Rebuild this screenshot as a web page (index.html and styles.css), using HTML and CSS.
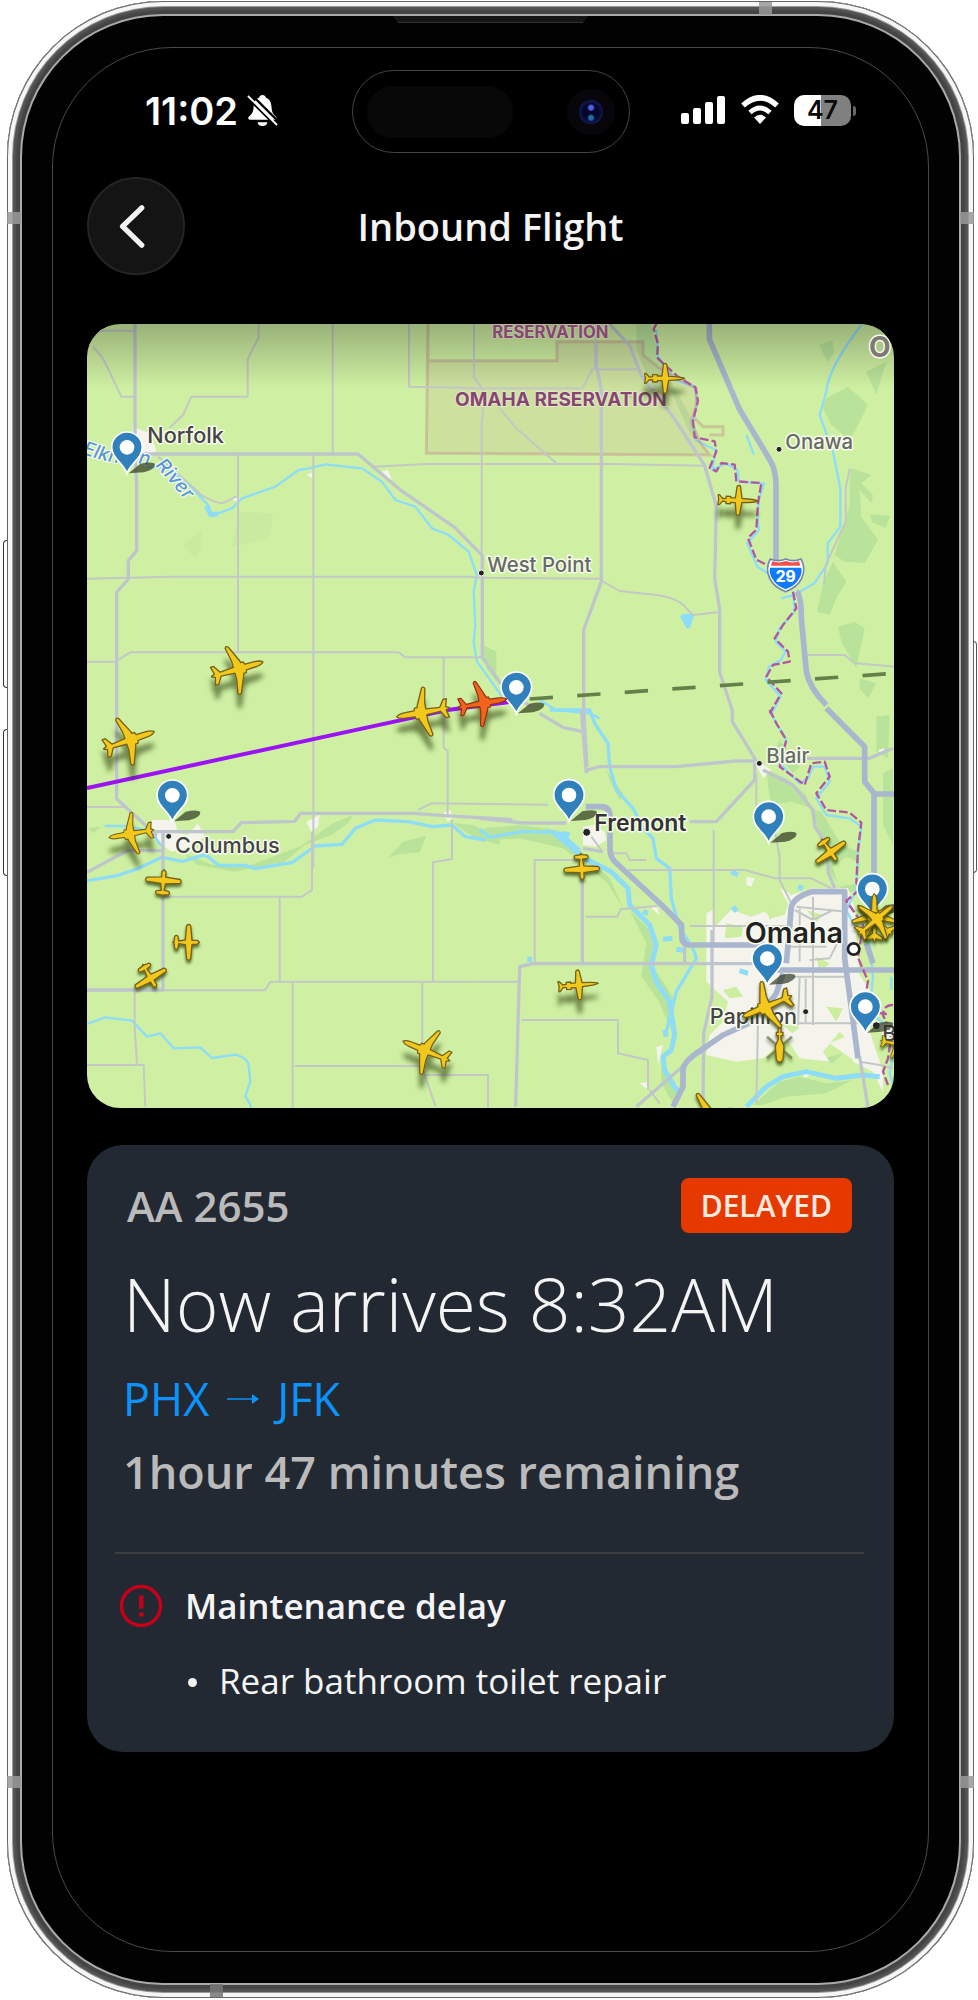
FILE: index.html
```html
<!DOCTYPE html>
<html lang="en">
<head>
<meta charset="utf-8">
<meta name="viewport" content="width=device-width, initial-scale=1">
<title>Inbound Flight</title>
<link rel="stylesheet" href="styles.css">
</head>
<body>
<div class="phone">
  <span class="side-key key-up"></span>
  <span class="side-key key-down"></span>
  <span class="side-key key-power"></span>
  <span class="antenna antenna-top"></span>
  <span class="antenna antenna-bottom"></span>
  <span class="antenna antenna-side left high"></span>
  <span class="antenna antenna-side right high"></span>
  <span class="antenna antenna-side left low"></span>
  <span class="antenna antenna-side right low"></span>
  <span class="earpiece"></span>

  <div class="screen">
    <div class="status-bar">
      <div class="status-time">
        <span>11:02</span>
        <svg class="icon-bell" viewBox="0 0 32 34" aria-hidden="true">
          <path d="M16 1c-2 0-3 1-3.400 2.500C8.500 5 7 8.500 6.800 13c-.2 5-1.300 7-5 10.500-1 1-.5 3 1.200 3h26c1.700 0 2-2 1-3-3.500-3.500-4.500-5.500-4.700-10.500C25 8.500 23.500 5 19.400 3.500 19 2 18 1 16 1zM11 29h10c0 2.500-2.500 4-5 4s-5-1.500-5-4z" fill="#fff"/>
          <path d="M3 -1L33 29M0 3L30 33" stroke="#000" stroke-width="2.500"/>
          <path d="M1 2L31 32" stroke="#fff" stroke-width="2"/>
        </svg>
      </div>
      <div class="island">
        <span class="sensor"></span>
        <span class="camera"><span class="lens"></span></span>
      </div>
      <div class="status-icons">
        <svg class="icon-signal" viewBox="0 0 46 30" aria-hidden="true" fill="#fff">
          <rect x="1" y="18" width="8" height="11" rx="2"/><rect x="13" y="13" width="8" height="16" rx="2"/><rect x="25" y="7" width="8" height="22" rx="2"/><rect x="37" y="1" width="8" height="28" rx="2"/>
        </svg>
        <svg class="icon-wifi" viewBox="0 0 38 30" aria-hidden="true">
          <path d="M2 10.500Q19-5 36 10.500" fill="none" stroke="#fff" stroke-width="5.500"/>
          <path d="M9 17.500Q19 8.500 29 17.500" fill="none" stroke="#fff" stroke-width="5"/>
          <path d="M13 22.500Q19 17 25 22.500L19 29z" fill="#fff"/>
        </svg>
        <div class="battery"><span>47</span></div>
      </div>
    </div>

    <header class="top-bar">
      <button class="back" type="button" aria-label="Back">
        <svg viewBox="0 0 98 98" aria-hidden="true"><path d="M55 30L35 49.500L55 69" fill="none" stroke="#f2f2f2" stroke-width="5.500" stroke-linecap="round" stroke-linejoin="round"/></svg>
      </button>
      <h1>Inbound Flight</h1>
    </header>

    <main>
      <svg class="map" viewBox="22 27 2421 2352" role="img" aria-label="Map of flight position">
        <defs>
          <linearGradient id="shade" x1="0" y1="0" x2="0" y2="1"><stop offset="0" stop-color="#000" stop-opacity=".26"/><stop offset=".5" stop-color="#000" stop-opacity=".13"/><stop offset="1" stop-color="#000" stop-opacity="0"/></linearGradient>
          <filter id="high" x="-50%" y="-50%" width="200%" height="230%"><feDropShadow dx="0" dy="40" stdDeviation="8" flood-color="#1c3000" flood-opacity=".55"/></filter>
          <filter id="low" x="-50%" y="-50%" width="200%" height="200%"><feDropShadow dx="0" dy="8" stdDeviation="4" flood-color="#1c3000" flood-opacity=".7"/></filter>
          <path id="jet" d="M80 0Q74-7 56-8L26-9L23-17L15-17L14-22L-8-72Q-14-78-18-70L-10-28L-10-9L-52-6L-66-28L-76-28L-70-5L-80-1V1L-70 5L-76 28L-66 28L-52 6L-10 9L-10 28L-18 70Q-14 78-8 72L14 22L15 17L23 17L26 9L56 8Q74 7 80 0z"/>
          <path id="biz" d="M60 0Q50-5 12-6L6-42Q2-48-4-42L-8-7L-22-7L-22-11L-36-11L-36-5L-46-4L-56-15L-60-15L-58 0L-60 15L-56 15L-46 4L-36 5L-36 11L-22 11L-22 7L-8 7L-4 42Q2 48 6 42L12 6Q50 5 60 0z"/>
          <path id="prop" d="M0-34L6-28L6-12L50-8Q57-2 50 4L7 8L4 28L18 30Q24 35 18 40L2 42L0 46L-2 42L-18 40Q-24 35-18 30L-4 28L-7 8L-50 4Q-57-2-50-8L-6-12L-6-28z"/>
          <g id="pin">
            <path d="M5 3L40-26Q78-34 84-24Q84-8 50 0z" fill="#28321c" opacity=".68"/>
            <path d="M0 4C-9-26-46-42-46-75A46 46 0 0 1 46-75C46-42 9-26 0 4z" fill="#2f80bb" stroke="#fff" stroke-width="5"/>
            <circle cy="-75" r="22" fill="#fff"/>
          </g>
        </defs>
        <rect x="22" y="27" width="2421" height="2352" fill="#cff0a2"/>

        <g class="wood">
          <path d="M480 590l100 5-10 75-115 25zM310 690l55-40v50l-20 30z" opacity=".35"/>
          <g transform="translate(1200 0)">
            <path d="M470 27h45l25 110 100 180 20 60-25-15-60-130-60-20-45-110z"/>
            <path d="M1018 90l40-15 5 40-20 25zM1040 250l65-35 60 55-35 70-20 35-55-45-25-50zM1160 170l60-30-30 100zM1115 460l60 20-30 25 35 35-5 25-35-40 5 80 50 70-40 70-60-5-30-20 45-150v-90zM1172 598l60 5-15 35-40-15zM1060 740l40 60-30 50-20 50-38-10 20-90zM1075 935l50-15 30 20-25 120-45-80zM1140 1090l50 15-25 45-25-30zM430 240l20-15 15 30z"/>
            <path d="M10 990l40 20v90l-30-40z"/>
          </g>
          <g transform="translate(0 1185)">
            <path d="M310 430l90 35 100 5 160-60 100-70 60-25-15 25-50 35-80 30-60 50-150 30-110-20zM925 445l45-50 70-18-20 50-60 5zM22 355l40-5-20 20zM1120 340l60 5 80 35v25l-80-25z"/>
          </g>
          <g transform="translate(1200 1185)">
            <path d="M860 180l60 25 60 50 20 80 30 80 20 70 40 60h50l-10-50 5-70-50-20-60-100-90-30-60 10-10-60zM1100 440l40 20-5 60-60 10-15-60zM1190 20l40-5-5 130-35-20zM1210 190l30-15v230l-30-60zM900 90l60 80-20 20-55-70z"/>
            <path d="M10 355l110-10 110 15 100 85 60 60 40 90-50-80-130-100-130-30-90 5zM450 600l80 80-10 90 60 90 5 120-50-110-50-70 15-100z"/>
            <path d="M820 1185l80-70 60-15 80 20 80-10-80 40-120 10-70 25zM545 1065l50 80-10 45-40-70z"/>
            <path d="M1010 1050l80-20-30 30zM380 180l50 70-10 20-30-60z"/>
          </g>
        </g>

        <g fill="#f4f4ec">
          <path d="M160 335l50 20 20 50-15 20-60-15zM680 480l20-8v18zM455 548l20-5-5 18zM905 470l20-5 15 40z"/>
          <g transform="translate(0 1185)"><path d="M215 330h70l10 40 30 5 30-35 20 40-40 30-60 15-55-40zM680 335l40-20-5 35-20 15zM1090 310l20-10 10 20-15 15z"/></g>
          <g transform="translate(1200 1185)">
            <path d="M310 350l30-5 35 20 5 25-30 20-40-5zM830 165l15-5 30 20-25 25z"/>
            <path d="M800 500l25 5-10 25-15-5zM680 610l20-10 5 50 50-50 60 20 40-15 20 20 40-10 20-60 60-20h110l20 60 5 90 10 110 40 60-10 110 40 120v60l-30-60-60-30-10-60-30-30-50 60 20 30-90-10-40-60-70 60-80 10-90-20 10-60 40-40 15-60-65-60z"/>
            <path d="M1050 1000l60-25 25 30-5 50-30-20zM510 590l20-5 10 30zM480 1120l25-5v25zM1185 930l30 20-10 20zM530 1010l20-5-15 60zM965 1080l40 5-30 20zM1195 120l20-5-10 20z"/>
            <path d="M900 535l30 15 20 40-25-10z"/>
          </g>
        </g>
        <g transform="translate(1200 1185)" fill="#cdeea0">
          <path d="M740 640l50 10-5 30-50 5zM860 590l30 20-20 20zM980 600l50 15-20 20zM730 840l40-10 20 30-40 5zM1010 740l40 20-30 30zM900 940l60 10-20 20zM1040 890l50 5-20 40zM840 900l30-10-20 30z"/>
        </g>

        <g class="water">
          <path d="M200 455l60 5 60 40 65 70 12 32 60-22 30-30 100-35 70-50 30-5 50-12 110 12 60 40 40 55 60 20 50 65 50 20 60 50 25 70-10 50 5 100-5 50 10 60 40 55 35 50"/>
          <path class="fat" d="M380 572l14 28 20-4"/>
          <g transform="translate(1200 0)">
            <path d="M1145 30q-100 130-105 200l-20 70 40 110 22 110v115l-38 50v60l-40 60-60 35-40 10M800 360l12 30 10 28"/>
            <path class="fat" d="M610 905l25-2-10 30z" fill="#8ddcf8"/>
            <path d="M530 45l5 80 50 70 60 20 8 50-15 60 10 50 60 30-10 60 40-20 35 20 5 35 75 5-15 50-5 50 5 40-35 40 30 70 40 25M940 830l5 60-45 50-12 40 30 30-15 25-35 20-10 40 45 50-30 55"/>
            <path d="M180 1155l50 30 100 10 30 15"/>
          </g>
          <g transform="translate(0 1185)">
            <path d="M22 942l55-20 80 10 45 48 40-10 40 45 80-3 35 32 70-10q40 10 40 35l5 45-15 45 15 25 7 35M75 348h60l80 15 30 45"/>
            <path class="mid" d="M22 512l90-15 60-20 75-35 60 12 70-20 40 32 80 0 30 10 110-18 70-50 80-5 40-48 60-25 100 5 70 15 60-5 40 35 60 10"/>
          </g>
          <g transform="translate(1200 1185)">
            <path class="mid" d="M0 358l30 24 100-18 90 3 40 5M200 360l60 25 40 35"/>
            <path class="fat" d="M225 370l90 75 80 40 50 50 5 50 60 60 20 60-15 60 15 50 40 60 15 100-10 45-25 20 5 40 30 50 15 20"/>
            <path class="fat" d="M250 370l20 5M490 605l15 5M550 688l28-3M590 718l20 3M150 740v15M555 960l5 20" />
            <path class="mid" d="M210 0h120l15 40 40 60 5 70 20 70 50 55 30 60 30 30 10 60 40 30 5 90 25 90 40 60 10 30-60 100-15 60-15 60"/>
            <path class="fat" d="M800 1190l60-60 50-30 70-15 90 20 80-10 50 5"/>
            <path class="fat" d="M755 485l20 10M760 590l10 15M965 525l-5 15M780 782l25 8"/>
            <path d="M870 0l20 40 30 50-20 70 60 60 25-15 15-35h35l15 45-40 50 30 50 70 10 35 25-10 80-5 110-30 60 20 40 50 60 10 100-10 100 80 80-20 110 10 30M1235 800v40"/>
          </g>
        </g>

        <g class="reservation">
          <path d="M1045 20V137H1432V80H1690V120L1740 160 1850 220V270L1835 320 1860 380 1890 420 1040 415z"/>
          <path d="M1845 310l25 25h60v25h-40" fill="none"/>
        </g>

        <g class="road">
          <path d="M22 55l55-8h88M40 95l30 35 55 115h40M537 27v40l-33 65v113H335l-25 55-40 38M759 27v387M988 27v188l220 5h300l30-57h140M1183 27v160l28 38v50l-5 50v400M235 425l70 60 60 55q50 30 70 22l40-20M475 418v595M701 418v1240M22 791l250-6h895l40 3 360 3M22 1040h85l45-28h805l20 15h230M880 455l160-8h560l270 5M1550 27l-5 130M1260 280l50 60 120 105M1092 1028v270l12 10v200"/>
          <path d="M1570 800l50 28 110 12q70 10 90 40l20 20 75-8M2185 1020h110l30 25 120 10M2310 460l-12 60v100l-60 130-5 60"/>
          <g transform="translate(0 1185)">
            <path d="M22 291h115M697 365v175l-30 20H250M600 563v250M22 841h533l18-26h627M165 841v110l7 115M22 1065h170l5 125M639 815v380M645 1068h380M1028 815v260l40 115M1035 1095h190v100M1060 815V457l57-10V330M1015 300l40-20 350 4"/>
          </g>
          <g transform="translate(1200 1185)">
            <path d="M165 760V450h145M318 620h95l10-22 110-10M0 815h115M125 930h290v100l90 20v90M445 480h350l90 25h110l60 30M702 360v340M830 1180l5-250M400 430h40l10 20h50M885 360l15 80v70l35 70M830 190v100M630 648h310M960 800l-5 145M978 806v135M1000 560v385M940 800h170M940 940h200M950 590l150 15M945 600l55 30 60-30M990 750l60-5 30-60M510 1140l30 40M335 380l30 40M960 595v160M930 710h110M1140 1055l60 10 40 10"/>
          </g>
        </g>
        <g class="main-road">
          <path d="M166 27v390l5 90v200l-25 30v55l-35 40v620l50 45 70 65M190 417h645l130 110 160 110 83 85v305l60 85 80 60M1550 90v60l15 75v575l-53 145v240l10 170M1590 27l60 65 35 90 100 130 90 140 35 120-5 220 15 90v190l40 120"/>
          <g transform="translate(0 1185)">
            <path d="M22 487l120-65h110M215 365h245l25-27 160-4 18-24h335l100 7 200 12M250 370v470H22"/>
          </g>
          <g transform="translate(1200 1185)">
            <path d="M0 325l130 14h130M180 10l70 42 55 12M305 0l15 190M318 182l40-12h230l180-17h60M758 0v35l72 118M825 160v50l-115 125h-80M850 180l90 45 60 75 5 50 40 55v80l20 50M980 145h190l70-30M308 470v290M108 1190l12-420 40-9h680M615 710v50M697 660v200l-25 110-2 220M470 1190l150-130M310 415l60 10M1140 1040l25 150"/>
          </g>
        </g>
        <g class="highway">
          <path d="M1889 27v45l90 210 90 150q20 30 20 80V760M2150 830q15 10 15 80l15 160q10 50 60 100"/>
          <g transform="translate(1200 1185)">
            <path d="M1040-5l115 115v105l28 35v320M1190 252h55M318 290h45q28 0 28 30v100q0 25 25 45l130 120 60 60v30q0 30 25 30h220l25 75h400M920 760l15-170q10-30 60-45h100v200l40 300M580 1190l30-60v-50q0-20 40-50l80-55 100-45 60-80 20-60M1160 700l20 60"/>
          </g>
        </g>
        <g class="border">
          <path d="M1730 27l-8 15 13 45-3 40 20 20 45 40 50 30 8 40-15 60 5 50 60 12 5 30-20 50 20 10 15-25 40 5 5 50 75 5-10 60-5 80-25 25 25 65 40 20M2140 830l10 50-40 50-25 40 40 40 5 30-50 10-20 35 45 50-35 60"/>
          <g transform="translate(1200 1185)"><path d="M870 0l20 40 30 50-20 80 75 55 20-65 40-5 15 45-40 50 30 50 70 8 35 30-10 80-5 100 10 20-40 35 50 70-15 100 30 70-15 90 80 10M1240 885q-30 0-30 30l25 60-10 70-15 40 15 40"/></g>
        </g>

        <rect x="22" y="27" width="2421" height="195" fill="url(#shade)"/>

        <path d="M22 1419L1110 1184L1300 1160" fill="none" stroke="#9a12f5" stroke-width="12"/>
        <path d="M1350 1152L2443 1075" class="planned"/>

        <g class="dots">
          <circle cx="1205" cy="774" r="9"/><circle cx="2098" cy="403" r="9"/><circle cx="267" cy="1564" r="9"/>
          <circle cx="1521" cy="1552" r="12"/><circle cx="2039" cy="1345" r="9"/><circle cx="2178" cy="2090" r="9"/><circle cx="2390" cy="2132" r="12"/>
          <circle cx="2322" cy="1902" r="17" fill="#fff" stroke="#222" stroke-width="8"/>
        </g>

        <path id="river" d="M6 416Q60 435 110 444Q190 440 235 462Q280 510 320 560Q350 575 400 572" fill="none"/>
        <g class="labels">
          <text class="river"><textPath href="#river">Elkhorn River</textPath></text>
          <text x="203" y="383" class="town">Norfolk</text>
          <text x="1223" y="772" class="muted">West Point</text>
          <text x="2117" y="403" class="muted">Onawa</text>
          <text x="286" y="1613" class="town">Columbus</text>
          <text x="1544" y="1548" class="town big">Fremont</text>
          <text x="2060" y="1343" class="muted">Blair</text>
          <text x="1995" y="1885" class="city">Omaha</text>
          <text x="1890" y="2127" class="town">Papillion</text>
          <text x="2408" y="2178" class="town">Bellevue</text>
          <text x="1238" y="70" class="area small">RESERVATION</text>
          <text x="1126" y="274" class="area">OMAHA RESERVATION</text>
          <text x="2368" y="127" class="state">O</text>
        </g>

        <g transform="translate(2118 780)">
          <path d="M-46-48Q-23-38 0-48Q23-38 46-48Q62-20 48 10Q36 36 0 50Q-36 36-48 10Q-62-20-46-48z" fill="#fff" stroke="#7486b0" stroke-width="5"/>
          <path d="M-40-41Q-20-34 0-42Q20-34 40-41L44-28H-44z" fill="#f0514e"/>
          <path d="M-47-22H47Q50-5 41 10Q30 32 0 43Q-30 32-41 10Q-50-5-47-22z" fill="#0f7bfa"/>
          <text x="0" y="22" class="shield" text-anchor="middle">29</text>
        </g>

        <g>
          <use href="#pin" x="142" y="472"/><use href="#pin" x="278" y="1516"/><use href="#pin" x="1310" y="1192"/>
          <use href="#pin" x="1468" y="1515"/><use href="#pin" x="2067" y="1580"/><use href="#pin" x="2378" y="1797"/>
          <use href="#pin" x="2063" y="2006"/><use href="#pin" x="2357" y="2150"/>
        </g>

        <g class="plane">
          <g filter="url(#high)"><use href="#jet" transform="translate(473 1063) rotate(-16)"/></g>
          <g filter="url(#high)"><use href="#jet" transform="translate(148 1276) rotate(-19)"/></g>
          <g filter="url(#high)"><use href="#jet" transform="translate(1030 1192) rotate(170)"/></g>
          <g filter="url(#high)"><use href="#jet" transform="translate(155 1556) rotate(170) scale(.85)"/></g>
          <g filter="url(#high)"><use href="#jet" transform="translate(1040 2208) rotate(203) scale(.95)"/></g>
          <g filter="url(#high)"><use href="#biz" transform="translate(1755 190)"/></g>
          <g filter="url(#high)"><use href="#biz" transform="translate(1975 556) rotate(2)"/></g>
          <g filter="url(#high)"><use href="#biz" transform="translate(1496 2010) rotate(-5)"/></g>
          <g filter="url(#low)"><use href="#prop" transform="translate(251 1698) rotate(4)"/></g>
          <g filter="url(#low)"><use href="#prop" transform="translate(325 1882) rotate(90)"/></g>
          <g filter="url(#low)"><use href="#prop" transform="translate(212 1988) rotate(150)"/></g>
          <g filter="url(#low)"><use href="#prop" transform="translate(1506 1661) rotate(177)"/></g>
          <g filter="url(#low)"><use href="#prop" transform="translate(2252 1610) rotate(-35) rotate(180)"/></g>
          <g filter="url(#low)"><use href="#jet" transform="translate(2062 2074) rotate(157)"/></g>
          <g filter="url(#low)"><use href="#jet" transform="translate(2384 1808) rotate(-90) scale(.9)"/></g>
          <g filter="url(#low)"><use href="#jet" transform="translate(2386 1815) rotate(-140) scale(.85)"/></g>
          <g filter="url(#low)"><use href="#jet" transform="translate(2388 1815) rotate(-40) scale(.85)"/></g>
          <g filter="url(#low)"><use href="#jet" transform="translate(2450 2186) rotate(10) scale(.6)"/></g>
          <g filter="url(#low)"><use href="#jet" transform="translate(1885 2404) rotate(-15)"/></g>
          <g filter="url(#low)"><path d="M2062 2165l75 65M2137 2165l-75 65" stroke="#555c35" stroke-width="8" opacity=".6"/><path d="M2096 2140h8v12h6v10h-6v10l9 22-3 40-6 7h-8l-6-7-3-40 9-22v-10h-6v-10h6z"/></g>
        </g>
        <g class="plane own" filter="url(#high)"><use href="#jet" transform="translate(1208 1165) rotate(-10) scale(.92)"/></g>
      </svg>

      <section class="card">
        <div class="card-top">
          <span class="flight">AA 2655</span>
          <span class="badge">DELAYED</span>
        </div>
        <div class="summary">
          <h2>Now arrives 8:32AM</h2>
          <p class="route"><span>PHX</span>
            <svg class="arrow" viewBox="0 0 32 12" role="img" aria-label="to"><path d="M0 6H27" stroke="#0a78cc" stroke-width="2"/><path d="M25 1L32 6L25 11z" fill="#0c92f8"/></svg>
            <span>JFK</span></p>
          <p class="remaining">1hour 47 minutes remaining</p>
        </div>
        <div class="reason">
          <h3>
            <svg class="alert" viewBox="0 0 44 44" aria-hidden="true"><circle cx="22" cy="22" r="19.500" fill="none" stroke="#c50018" stroke-width="3.500"/><path d="M20 11.500h4.500v13H20zM20 28.500h4.500v4H20z" fill="#c50018"/></svg>
            Maintenance delay
          </h3>
          <ul><li>Rear bathroom toilet repair</li></ul>
        </div>
      </section>
    </main>
  </div>
</div>
</body>
</html>
```
FILE: styles.css
```css
* { box-sizing: border-box; }
body {
  margin: 0;
  background: #fff;
  color: #f4f4f4;
  font-family: "Open Sans", "Noto Sans", sans-serif;
}
h1, h2, h3, p, ul { margin: 0; padding: 0; }

/* Handset */
.phone {
  position: relative;
  margin: 1px 4px 2px 7px;
  padding: 46px 45px;
  border-radius: 156px;
  background: #020202;
  box-shadow:
    inset 0 0 0 1px #666,
    inset 0 0 0 5px #f6f6f6,
    inset 0 0 0 6px #999,
    inset 0 0 2px 9px #555,
    inset 0 0 0 13px #444,
    inset 0 0 0 15px #aaa;
}
.side-key {
  position: absolute;
  left: -4px;
  width: 4px;
  border: 1px solid #333;
  border-right: 0;
  border-radius: 4px 0 0 4px;
}
.key-up { top: 539px; height: 148px; }
.key-down { top: 728px; height: 147px; }
.key-power {
  top: 640px;
  left: auto;
  right: -3px;
  height: 232px;
  border: 1px solid #555;
  border-left: 0;
  border-radius: 0 4px 4px 0;
}
.antenna { position: absolute; background: #999; opacity: .85; }
.antenna-top { top: 1px; right: 202px; width: 13px; height: 13px; }
.antenna-bottom { bottom: 1px; left: 203px; width: 13px; height: 13px; background: #777; }
.antenna-side { width: 14px; height: 12px; }
.left { left: 0; }
.right { right: 0; }
.high { top: 211px; }
.low { bottom: 210px; }
.earpiece {
  position: absolute;
  top: 15px;
  left: calc(50% - 98px);
  width: 196px;
  height: 7px;
  background: #151515;
  border-bottom: 1px solid #333;
  clip-path: polygon(0 0, 100% 0, 97% 100%, 3% 100%);
}

.screen {
  border: 1px solid #4a4a4a;
  border-radius: 120px;
  padding: 22px 34px 199px;
  background: #000;
}

/* Status bar */
.status-bar {
  display: grid;
  grid-template-columns: 1fr 278px 1fr;
  align-items: center;
}
.status-time {
  display: flex;
  align-items: center;
  gap: 9px;
  padding: 0 0 2px 58px;
  font: 600 38px/40px Inter, sans-serif;
  color: #fff;
}
.icon-bell { width: 31px; height: 33px; }
.island {
  display: flex;
  align-items: center;
  justify-content: space-between;
  height: 83px;
  padding: 0 14px;
  border: 1px solid #444;
  border-radius: 42px;
}
.sensor { width: 146px; height: 52px; border-radius: 26px; background: #080808; }
.camera {
  display: grid;
  place-items: center;
  width: 48px;
  height: 46px;
  border-radius: 50%;
  background: #08060a;
}
.lens {
  width: 24px;
  height: 24px;
  border-radius: 50%;
  background:
    radial-gradient(circle at 50% 32%, #5060e0 0 2px, transparent 4px),
    radial-gradient(circle at 50% 74%, #2070a0 0 2px, transparent 4px),
    radial-gradient(circle, #05062a 45%, #131e5e 75%);
}
.status-icons {
  display: flex;
  align-items: center;
  justify-content: flex-end;
  gap: 15px;
  padding: 0 43px 3px 0;
}
.icon-signal { width: 46px; height: 30px; }
.icon-wifi { width: 38px; height: 30px; }
.battery {
  position: relative;
  width: 57px;
  height: 31px;
  border-radius: 10px;
  background: linear-gradient(90deg, #fff 47%, #808080 47%);
  color: #0a0a0a;
  font: 600 25px/31px Inter, sans-serif;
  text-align: center;
}
.battery::after {
  content: "";
  position: absolute;
  right: -5px;
  top: 11px;
  width: 3px;
  height: 10px;
  border-radius: 0 3px 3px 0;
  background: #666;
}

/* Title bar */
.top-bar {
  display: grid;
  grid-template-columns: 98px 1fr 98px;
  align-items: center;
  margin: 24px 0 49px;
}
.back {
  width: 98px;
  height: 98px;
  padding: 0;
  border: 2px solid #242424;
  border-radius: 50%;
  background: #141414;
}
.back svg { display: block; width: 100%; }
.top-bar h1 {
  font-size: 38px;
  line-height: 48px;
  font-weight: 600;
  text-align: center;
}

/* Map */
.map {
  display: block;
  width: 100%;
  border-radius: 33px;
  font-family: Inter, sans-serif;
}
.wood { fill: #b9e39a; }
.water { fill: none; stroke: #8ddcf8; stroke-width: 7; stroke-linejoin: round; }
.water .mid { stroke-width: 10; }
.water .fat { stroke-width: 15; }
.reservation { fill: #c87882; fill-opacity: .12; stroke: #c0808c; stroke-opacity: .38; stroke-width: 9; }
.road, .main-road, .highway { fill: none; stroke-linejoin: round; }
.road { stroke: #c3c8c6; stroke-width: 6; }
.main-road { stroke: #bfc5cd; stroke-width: 10; }
.highway { stroke: #aab6cd; stroke-width: 17; }
.border { fill: none; stroke: #b358a0; stroke-width: 7; stroke-dasharray: 26 9; stroke-linejoin: round; }
.planned { fill: none; stroke: #66804a; stroke-width: 11; stroke-dasharray: 70 73; }
.dots { fill: #222; stroke: #fff; stroke-width: 3; }
.labels { paint-order: stroke; stroke: #f8fbf0; stroke-width: 9; stroke-linejoin: round; }
.town { font-size: 65px; font-weight: 500; fill: #444; }
.big { font-size: 69px; font-weight: 600; fill: #333; }
.muted { font-size: 61px; font-weight: 500; fill: #666b62; }
.city { font-size: 86px; font-weight: 600; fill: #222; }
.area { font-size: 57px; font-weight: 700; fill: #85476f; stroke-width: 6; stroke: #e6e6cf; }
.small { font-size: 50px; stroke: #b9bfa0; }
.state { font-size: 84px; font-weight: 700; fill: #7c7a72; }
.river { font-size: 57px; font-style: italic; font-weight: 500; fill: #5797d2; stroke-width: 7; }
.shield { font-size: 46px; font-weight: 800; fill: #fff; }
.plane { fill: #f3c81c; stroke: #75611a; stroke-width: 4; stroke-linejoin: round; }
.own { fill: #f2641f; stroke: #8c3510; }

/* Flight card */
.card {
  margin-top: 37px;
  padding: 33px 30px 49px 28px;
  border-radius: 36px;
  background: #222933;
}
.card-top {
  display: flex;
  align-items: center;
  justify-content: space-between;
  padding: 0 12px;
}
.flight { color: #bababa; font-size: 42px; line-height: 55px; font-weight: 600; }
.badge {
  padding: 0 20px;
  border-radius: 8px;
  background: #e63900;
  color: #ffeae0;
  font-size: 30px;
  line-height: 55px;
  font-weight: 600;
}
.summary { padding: 27px 0 52px 8px; }
.summary h2 { font-size: 73px; line-height: 88px; font-weight: 300; white-space: nowrap; }
.route {
  display: flex;
  align-items: center;
  gap: 18px;
  padding-top: 23px;
  color: #0c92f8;
  font-size: 45px;
  line-height: 56px;
}
.arrow { width: 32px; height: 12px; }
.remaining { padding-top: 17px; color: #bababa; font-size: 45px; line-height: 56px; font-weight: 600; }
.reason { border-top: 2px solid #3c3e42; padding: 30px 0 0 4px; }
.reason h3 {
  display: flex;
  align-items: center;
  gap: 22px;
  font-size: 35px;
  line-height: 44px;
  font-weight: 600;
}
.alert { width: 44px; height: 44px; }
.reason ul { padding: 31px 0 0 100px; font-size: 35px; line-height: 44px; }
.reason li { list-style: none; position: relative; }
.reason li::before {
  content: "";
  position: absolute;
  left: -31px;
  top: 19px;
  width: 9px;
  height: 9px;
  border-radius: 50%;
  background: #f0f0f0;
}
```
